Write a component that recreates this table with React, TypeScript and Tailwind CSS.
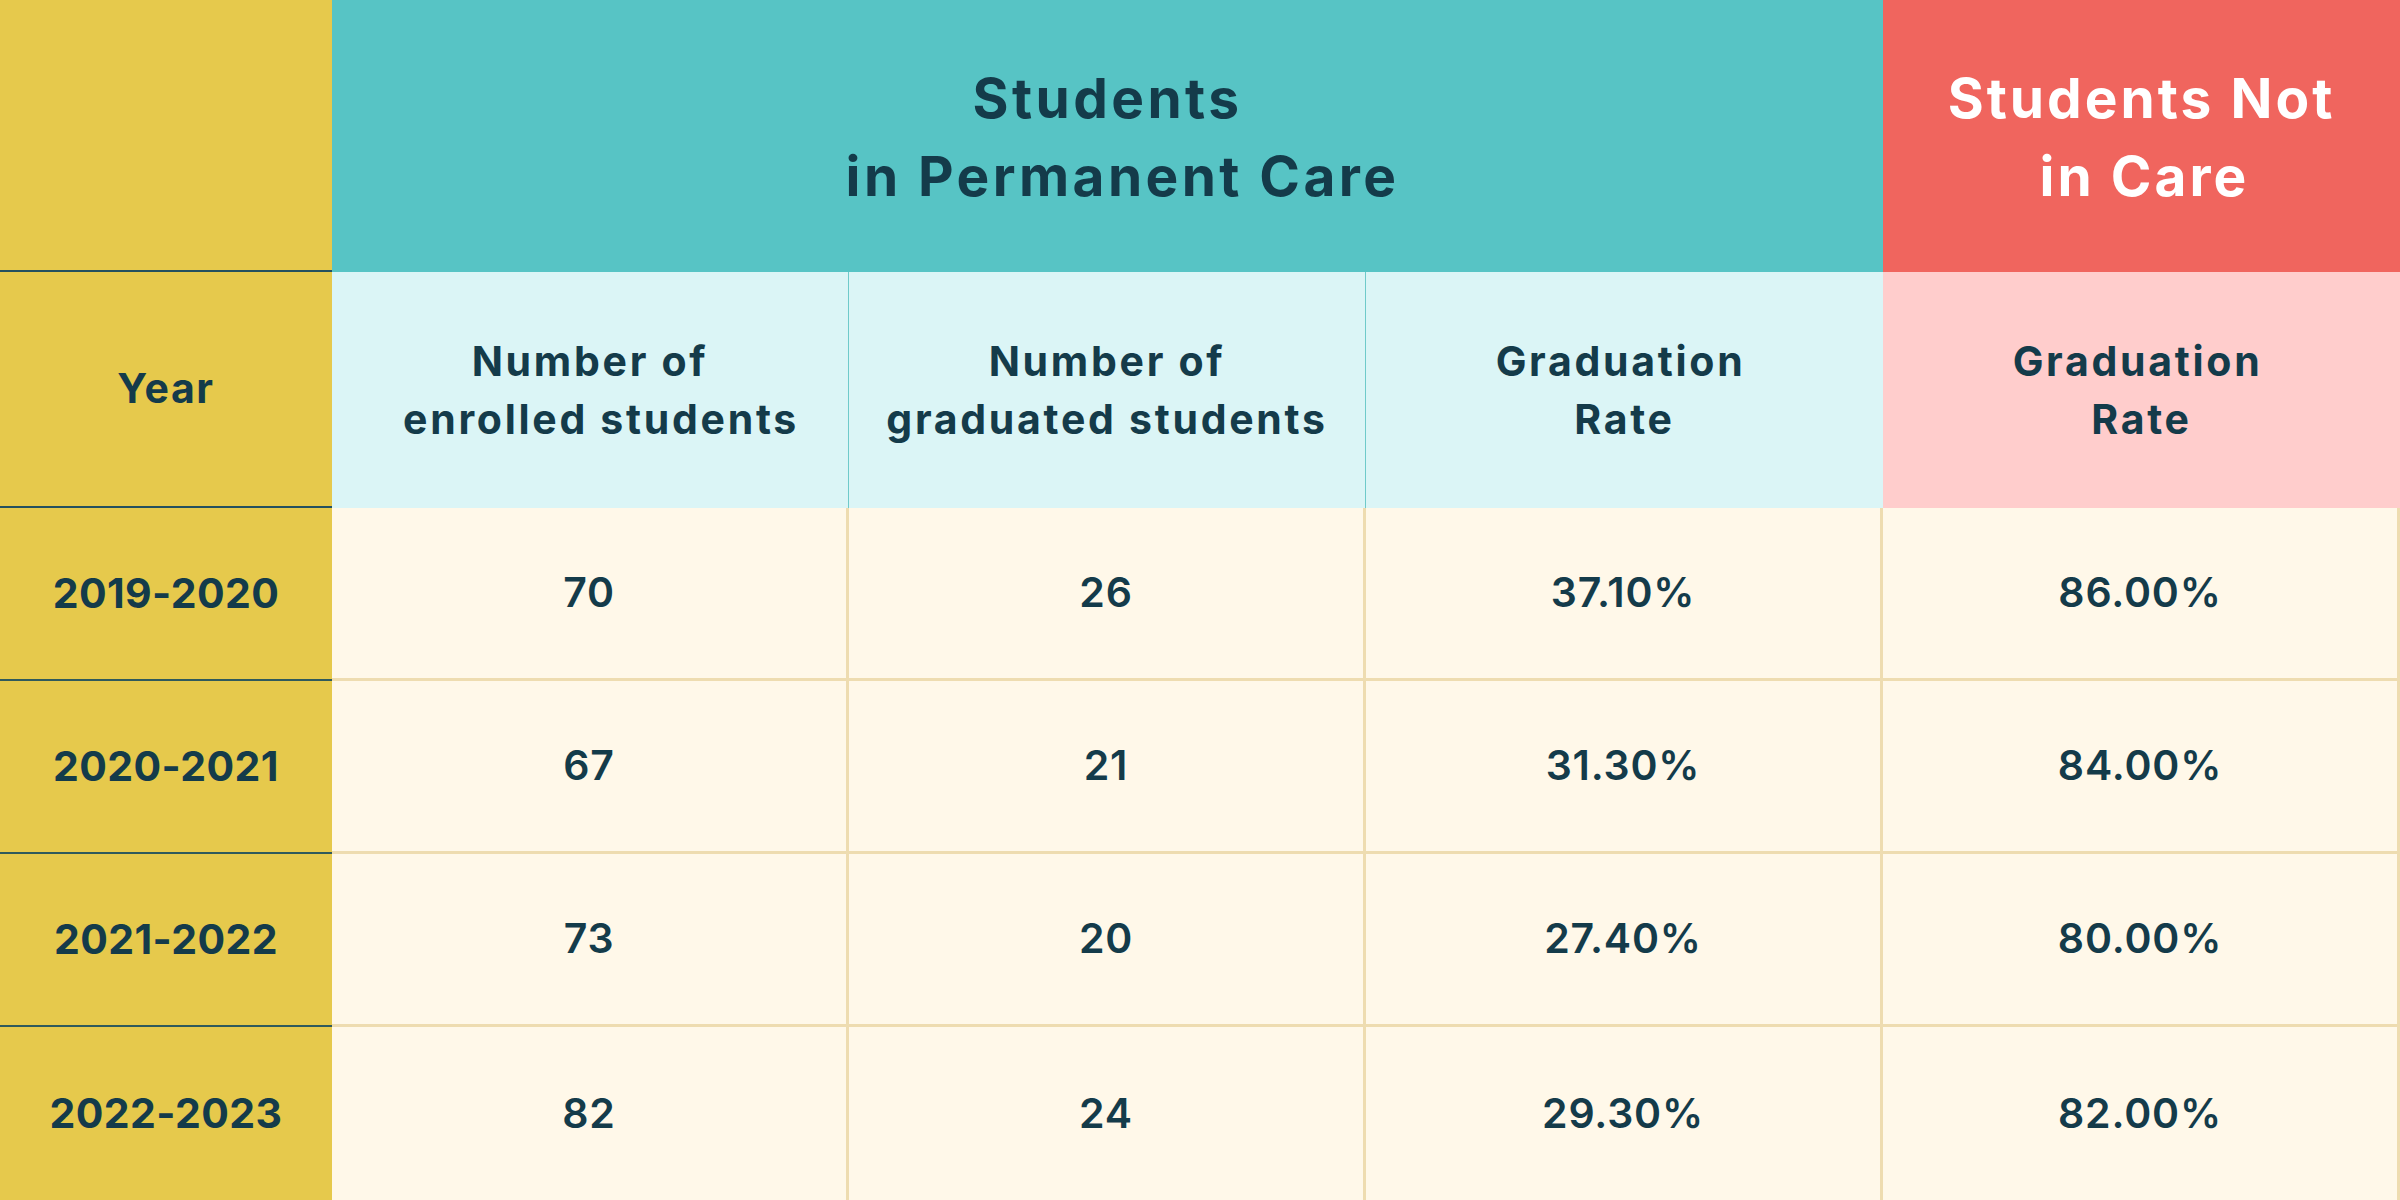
import React from "react";

const rows = [
  { year: "2019-2020", a: "70", b: "26", c: "37.10%", d: "86.00%" },
  { year: "2020-2021", a: "67", b: "21", c: "31.30%", d: "84.00%" },
  { year: "2021-2022", a: "73", b: "20", c: "27.40%", d: "80.00%" },
  { year: "2022-2023", a: "82", b: "24", c: "29.30%", d: "82.00%" },
];

export default function App() {
  const font = { fontFamily: "Inter, 'Open Sans', sans-serif" };
  return (
    <div
      className="w-[2400px] h-[1200px] grid grid-cols-[332px_1fr_1fr_1fr_1fr] grid-rows-[272px_236px_1fr_1fr_1fr_1fr] text-[#143b4a] overflow-hidden"
      style={font}
    >
      {/* top header row */}
      <div className="bg-[#e6c94c] border-b-2 border-[#24505f]" />
      <div className="col-span-3 bg-[#57c4c5] flex items-center justify-center text-center">
        <div className="flex flex-col items-center text-[55px] leading-[78px] font-bold tracking-[0.062em] pt-[2px]">
          <span>Students</span>
          <span className="pl-[30px]">in Permanent Care</span>
        </div>
      </div>
      <div className="bg-[#f0655e] flex items-center justify-center text-center text-white">
        <div className="flex flex-col items-center text-[55px] leading-[78px] font-bold tracking-[0.055em] pt-[2px]">
          <span>Students Not</span>
          <span className="pl-[6px]">in Care</span>
        </div>
      </div>

      {/* sub header row */}
      <div className="bg-[#e6c94c] border-b-2 border-[#24505f] flex items-center justify-center">
        <span className="text-[41px] font-bold tracking-[0.04em]">Year</span>
      </div>
      <div className="bg-[#dbf5f6] border-r border-[#6fcaca] flex items-center justify-center text-center">
        <div className="flex flex-col items-center text-[41px] leading-[58px] font-bold tracking-[0.066em]">
          <span>Number of</span>
          <span className="pl-[22px]">enrolled students</span>
        </div>
      </div>
      <div className="bg-[#dbf5f6] border-r border-[#6fcaca] flex items-center justify-center text-center">
        <div className="flex flex-col items-center text-[41px] leading-[58px] font-bold tracking-[0.066em]">
          <span>Number of</span>
          <span>graduated students</span>
        </div>
      </div>
      <div className="bg-[#dbf5f6] flex items-center justify-center text-center">
        <div className="flex flex-col items-center text-[41px] leading-[58px] font-bold tracking-[0.066em]">
          <span className="pr-[8px]">Graduation</span>
          <span>Rate</span>
        </div>
      </div>
      <div className="bg-[#ffcdcc] flex items-center justify-center text-center">
        <div className="flex flex-col items-center text-[41px] leading-[58px] font-bold tracking-[0.066em]">
          <span className="pr-[8px]">Graduation</span>
          <span>Rate</span>
        </div>
      </div>

      {/* data rows */}
      {rows.map((r, i) => {
        const last = i === rows.length - 1;
        const cell =
          "bg-[#fff8e9] border-r-[3px] border-[#eedcb0] flex items-center justify-center text-[41px] font-semibold tracking-[0.02em]";
        return (
          <React.Fragment key={r.year}>
            <div
              className={
                last
                  ? "bg-[#e6c94c] flex items-center justify-center"
                  : "bg-[#e6c94c] border-b-2 border-[#2f5a5c] flex items-center justify-center"
              }
            >
              <span className="text-[41px] font-bold tracking-[0.01em]">{r.year}</span>
            </div>
            <div className={last ? cell : cell + " border-b-[3px]"}>{r.a}</div>
            <div className={last ? cell : cell + " border-b-[3px]"}>{r.b}</div>
            <div className={last ? cell : cell + " border-b-[3px]"}>{r.c}</div>
            <div className={last ? cell : cell + " border-b-[3px]"}>{r.d}</div>
          </React.Fragment>
        );
      })}
    </div>
  );
}
